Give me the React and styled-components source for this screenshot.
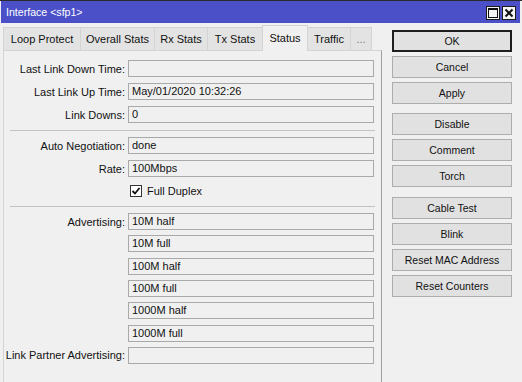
import React from "react";
import styled, { createGlobalStyle } from "styled-components";

const Global = createGlobalStyle`
  html, body { margin: 0; padding: 0; background: #f0f0f0; }
  body { font-family: "Liberation Sans", Arial, sans-serif; font-size: 11px; color: #111; }
  * { box-sizing: border-box; }
`;

const Window = styled.div`
  width: 522px;
  height: 382px;
  overflow: hidden;
  background: #f0f0f0;
  border-top: 1px solid #2b2b2b;
  padding: 0 2px 0 1px;
  display: flex;
  flex-direction: column;
`;

const TitleBar = styled.div`
  height: 22px;
  flex: none;
  background: #4b50c8;
  color: #fff;
  display: flex;
  align-items: center;
  justify-content: space-between;
  padding: 0 4px 0 5px;
  font-size: 10.6px;
`;

const Controls = styled.div`
  display: flex;
  gap: 2px;
  margin-top: 2px;
`;

const CtrlBox = styled.div`
  width: 14px;
  height: 14px;
  background: #f4f4f4;
  border: 1px solid #1c1c1c;
  display: flex;
  align-items: center;
  justify-content: center;
`;

const Body = styled.div`
  flex: 1;
  display: flex;
  padding: 2px 0 0 2px;
  min-height: 0;
`;

const LeftPane = styled.div`
  width: 379px;
  display: flex;
  flex-direction: column;
`;

const TabRow = styled.div`
  height: 26px;
  display: flex;
  align-items: flex-end;
  margin-bottom: -1px;
  position: relative;
  z-index: 1;
  padding-left: 1px;
`;

const Tab = styled.div`
  width: ${(p) => p.$w}px;
  height: ${(p) => (p.$active ? 26 : 24)}px;
  margin-left: -1px;
  border: 1px solid #d4d4d4;
  border-bottom: ${(p) => (p.$active ? "none" : "1px solid #d4d4d4")};
  background: ${(p) => (p.$active ? "#f0f0f0" : "#e3e3e3")};
  display: flex;
  align-items: center;
  justify-content: center;
  padding-bottom: ${(p) => (p.$active ? 2 : 0)}px;
  white-space: nowrap;
  color: ${(p) => (p.$muted ? "#777" : "#111")};
`;

const Panel = styled.div`
  flex: 1;
  border: 1px solid #d4d4d4;
  border-right-color: #a0a0a0;
  border-bottom: none;
  background: #f0f0f0;
  padding: 9px 0 0 0;
  display: flex;
  flex-direction: column;
`;

const Group = styled.div`
  display: flex;
  flex-direction: column;
  gap: ${(p) => p.$gap}px;
  margin-top: ${(p) => p.$top || 0}px;
`;

const Field = styled.div`
  display: grid;
  grid-template-columns: 121px 246px;
  column-gap: 3px;
  align-items: center;
  height: 17px;
`;

const Label = styled.div`
  text-align: right;
  white-space: nowrap;
`;

const Value = styled.div`
  height: 17px;
  border: 1px solid #a9a9a9;
  background: #f0f0f0;
  padding: 0 3px;
  line-height: 15px;
  white-space: nowrap;
`;

const Separator = styled.div`
  height: 1px;
  background: #c3c3c3;
  margin: 7px 6px 6px 6px;
`;

const CheckWrap = styled.div`
  display: flex;
  align-items: center;
  gap: 5px;
  padding-left: 2px;
`;

const CheckBox = styled.div`
  width: 12px;
  height: 12px;
  border: 1px solid #333;
  background: #fff;
  display: flex;
  align-items: center;
  justify-content: center;
`;

const RightPane = styled.div`
  width: 120px;
  margin-left: 10px;
  padding-top: 5px;
  display: flex;
  flex-direction: column;
`;

const ButtonGroup = styled.div`
  display: flex;
  flex-direction: column;
  gap: 4px;
  margin-top: ${(p) => p.$top || 0}px;
`;

const Button = styled.div`
  height: 22px;
  background: #e1e1e1;
  border: ${(p) => (p.$default ? "2px solid #1e1e1e" : "1px solid #adadad")};
  display: flex;
  align-items: center;
  justify-content: center;
  white-space: nowrap;
  font-size: 10.5px;
`;

const tabs = [
  { t: "Loop Protect", w: 78 },
  { t: "Overall Stats", w: 75 },
  { t: "Rx Stats", w: 54 },
  { t: "Tx Stats", w: 56 },
  { t: "Status", w: 46, active: true },
  { t: "Traffic", w: 44 },
  { t: "...", w: 22, muted: true },
];

const adv = ["10M half", "10M full", "100M half", "100M full", "1000M half", "1000M full"];

export default function App() {
  return (
    <>
      <Global />
      <Window>
        <TitleBar>
          <span>Interface &lt;sfp1&gt;</span>
          <Controls>
            <CtrlBox>
              <svg width="10" height="10" viewBox="0 0 10 10">
                <rect x="0.5" y="0.5" width="9" height="9" fill="none" stroke="#111" strokeWidth="1" />
                <rect x="0" y="0" width="10" height="2" fill="#111" />
              </svg>
            </CtrlBox>
            <CtrlBox>
              <svg width="10" height="10" viewBox="0 0 10 10">
                <path d="M1.5 1.5 L8.5 8.5 M8.5 1.5 L1.5 8.5" stroke="#111" strokeWidth="2" />
              </svg>
            </CtrlBox>
          </Controls>
        </TitleBar>
        <Body>
          <LeftPane>
            <TabRow>
              {tabs.map((t) => (
                <Tab key={t.t} $w={t.w} $active={t.active} $muted={t.muted}>
                  {t.t}
                </Tab>
              ))}
            </TabRow>
            <Panel>
              <Group $gap={6}>
                <Field>
                  <Label>Last Link Down Time:</Label>
                  <Value />
                </Field>
                <Field>
                  <Label>Last Link Up Time:</Label>
                  <Value>May/01/2020 10:32:26</Value>
                </Field>
                <Field>
                  <Label>Link Downs:</Label>
                  <Value>0</Value>
                </Field>
              </Group>
              <Separator />
              <Group $gap={6}>
                <Field>
                  <Label>Auto Negotiation:</Label>
                  <Value>done</Value>
                </Field>
                <Field>
                  <Label>Rate:</Label>
                  <Value>100Mbps</Value>
                </Field>
              </Group>
              <Group $gap={0} $top={5}>
                <Field>
                  <Label />
                  <CheckWrap>
                    <CheckBox>
                      <svg width="10" height="10" viewBox="0 0 10 10">
                        <path d="M1.5 5 L4 7.5 L8.5 2" fill="none" stroke="#111" strokeWidth="1.8" />
                      </svg>
                    </CheckBox>
                    <span>Full Duplex</span>
                  </CheckWrap>
                </Field>
              </Group>
              <Separator />
              <Group $gap={5.33}>
                {adv.map((a, i) => (
                  <Field key={a}>
                    <Label>{i === 0 ? "Advertising:" : ""}</Label>
                    <Value>{a}</Value>
                  </Field>
                ))}
                <Field>
                  <Label>Link Partner Advertising:</Label>
                  <Value />
                </Field>
              </Group>
            </Panel>
          </LeftPane>
          <RightPane>
            <ButtonGroup>
              <Button $default>OK</Button>
              <Button>Cancel</Button>
              <Button>Apply</Button>
            </ButtonGroup>
            <ButtonGroup $top={9}>
              <Button>Disable</Button>
              <Button>Comment</Button>
              <Button>Torch</Button>
            </ButtonGroup>
            <ButtonGroup $top={10}>
              <Button>Cable Test</Button>
              <Button>Blink</Button>
              <Button>Reset MAC Address</Button>
              <Button>Reset Counters</Button>
            </ButtonGroup>
          </RightPane>
        </Body>
      </Window>
    </>
  );
}
